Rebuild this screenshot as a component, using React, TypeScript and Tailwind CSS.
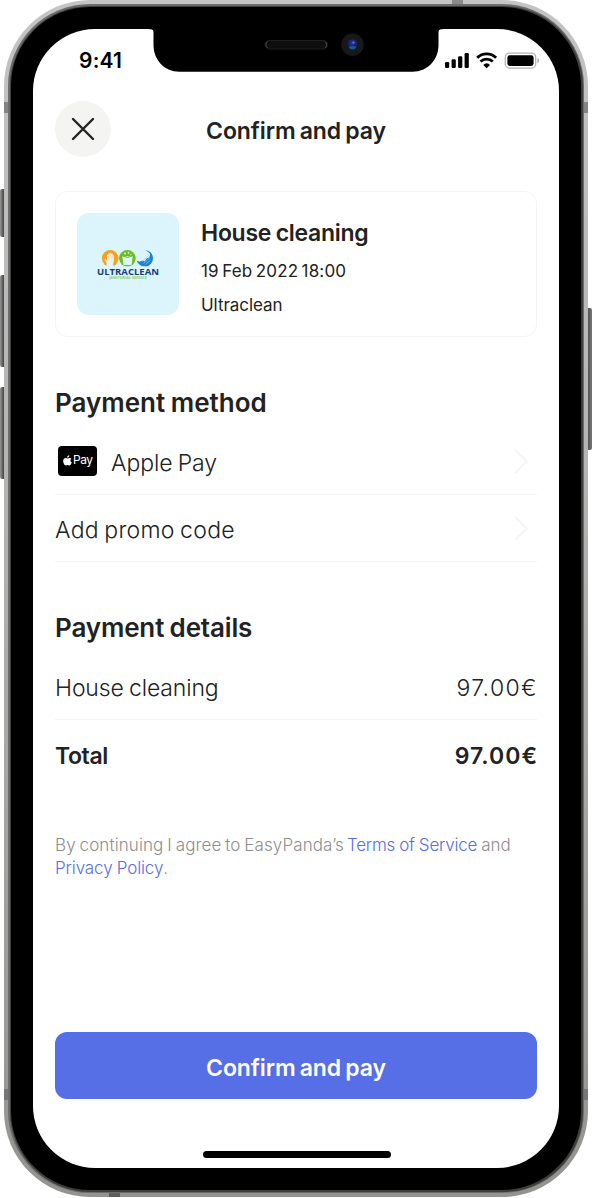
import type { ReactNode } from "react";

function StatusIcons() {
  return (
    <svg width="96" height="20" viewBox="0 0 96 20" fill="none">
      <g fill="#000">
        <rect x="1" y="12" width="4.200" height="6" rx="1.200" />
        <rect x="7.600" y="9.300" width="4.200" height="8.700" rx="1.200" />
        <rect x="14.100" y="6.200" width="4.200" height="11.800" rx="1.200" />
        <rect x="20.600" y="3" width="4.200" height="15" rx="1.200" />
      </g>
      <path d="M33.200 7.700a13.600 13.600 0 0 1 18.900 0" stroke="#000" strokeWidth="2.900" />
      <path d="M36.500 11.500a9 9 0 0 1 12.300 0" stroke="#000" strokeWidth="2.800" />
      <path d="M42.650 18.300l-3.400-3.400a5 5 0 0 1 6.800 0z" fill="#000" />
      <rect x="61.300" y="3.100" width="30.400" height="15" rx="4.200" stroke="#b3b3b3" strokeWidth="1.300" />
      <rect x="63.400" y="5.200" width="26.200" height="10.800" rx="2.400" fill="#000" />
      <path d="M93.400 8v5.200c1.100-.4 1.800-1.400 1.800-2.600s-.7-2.200-1.800-2.600z" fill="#b3b3b3" />
    </svg>
  );
}

function Notch() {
  return (
    <svg className="absolute left-1/2 top-[-1px] -translate-x-1/2" width="294" height="45" viewBox="0 0 294 45">
      <defs>
        <radialGradient id="lens" cx="50%" cy="35%" r="65%">
          <stop offset="0" stopColor="#3a2fa8" />
          <stop offset="0.5" stopColor="#14246f" />
          <stop offset="1" stopColor="#071225" />
        </radialGradient>
      </defs>
      <path d="M0 0v1.200h1.500Q4.500 1.200 4.500 4.500V17c0 15 11 26.700 26 26.700h233c15 0 26-11.700 26-26.700V4.500Q289.500 1.200 292.500 1.200H294V0z" fill="#000" />
      <rect x="116" y="12.500" width="62.500" height="8.500" rx="4.250" fill="#0e0e0e" stroke="#1f1f1f" />
      <path d="M118.500 13.500a4.200 4.200 0 0 0 0 6.500M176 13.500a4.200 4.200 0 0 1 0 6.500" stroke="#4a4a4a" strokeWidth="1" fill="none" />
      <circle cx="203.500" cy="16.700" r="11.200" fill="#181818" />
      <circle cx="203.500" cy="16.700" r="5.600" fill="url(#lens)" />
      <path d="M199.500 19q4-2 8 0-1.500 2.500-4 2.500t-4-2.500z" fill="#126a9c" opacity=".8" />
      <circle cx="204.500" cy="14.500" r="1.100" fill="#7d6cff" />
    </svg>
  );
}

function UltracleanLogo() {
  return (
    <svg width="64" height="32" viewBox="0 0 64 32">
      <circle cx="14.200" cy="9.300" r="8.300" fill="#f9a11b" />
      <path d="M10.600 18.500V13.800l-2.200-3.400 1-.7 1.600 1.700V5.800h1.300V4.400h1.500v-.7h1.500v1h1.400v1.500h1.200V12l-.6 2.500v4z" fill="#e6f3ee" />
      <path d="M12.500 6v3.500M14.300 5.500v4M16.100 6v3.500" stroke="#f9c77a" strokeWidth=".4" />
      <circle cx="31.400" cy="9.300" r="8.300" fill="#6abf1e" />
      <path d="M26.300 7.200h10.400l-1.100 8.800h-8.200z" fill="#dff5fd" />
      <path d="M27 7q4.500 3 9 0" stroke="#6abf1e" strokeWidth="1" fill="none" />
      <circle cx="29" cy="4.500" r="1" fill="#dff5fd" />
      <circle cx="32.500" cy="3.800" r=".9" fill="#dff5fd" />
      <circle cx="34.800" cy="5.600" r=".7" fill="#dff5fd" />
      <path d="M49 1a8.300 8.300 0 1 1-8.300 10.500l2.900 1.200 2.300-1 2.900.6 1.600-2.600 3-1.400.8-3.200Q52.500 2.500 49 1z" fill="#1b82d6" />
      <path d="M46 12.500l7-6M47.500 14.500l6.500-6M49.500 15.500l5-4.500" stroke="#8fcaf2" strokeWidth=".7" />
      <rect x="1" y="17.600" width="62" height="10" fill="#dcf5fd" />
      <text x="1" y="25.900" textLength="62" lengthAdjust="spacingAndGlyphs" fontFamily="Open Sans, sans-serif" fontWeight="700" fontSize="9.600" fill="#15407a">ULTRACLEAN</text>
      <text x="13" y="29.600" textLength="38" lengthAdjust="spacingAndGlyphs" fontFamily="Open Sans, sans-serif" fontWeight="700" fontSize="3.200" fill="#8fd06a">JANITORIAL SERVICE</text>
    </svg>
  );
}

function ApplePayBadge() {
  return (
    <span className="mb-[2px] ml-[3px] flex h-[30px] w-[39px] items-center justify-center gap-[1.5px] rounded-[4px] bg-black pb-px">
      <svg width="9" height="11" viewBox="0 0 16 19" fill="#fff">
        <path d="M11.200 0c.2 2.300-1.700 4.400-3.900 4.300C7 2.200 9 .1 11.200 0zM15 6.500c-2.600 1.600-2.200 5.300.6 6.500-.9 2.700-2.600 5.400-4.300 5.400-1.200 0-1.700-.8-3.100-.8s-2 .8-3.200.8C2.600 18.400.3 14 .3 10.500c0-3.500 2.200-5.500 4.500-5.500 1.500 0 2.600.9 3.500.9S10.500 5 12 5c1 0 2.200.5 3 1.500z" />
      </svg>
      <span className="text-[12px] leading-none tracking-[-0.5px] text-white">Pay</span>
    </span>
  );
}

function Chevron() {
  return (
    <svg className="mr-[8px] ml-auto" width="15" height="25" viewBox="0 0 15 25" fill="none">
      <path d="M1.500 1.500l11.500 11-11.500 11" stroke="#f4f4f2" strokeWidth="2" strokeLinecap="round" strokeLinejoin="round" />
    </svg>
  );
}

function Row({ children, className }: { children: ReactNode; className: string }) {
  return <div className={`flex items-center ${className}`}>{children}</div>;
}

export default function App() {
  return (
    <main
      className="relative h-[1198px] w-[592px] overflow-hidden bg-white pl-1 text-[#222]"
      style={{ fontFamily: "Inter, 'Liberation Sans', sans-serif" }}
    >
      <i className="absolute left-0 top-[189px] h-[48px] w-1 rounded-l-[2px] bg-linear-to-r from-[#999] via-[#6b6b6b] to-[#444]" />
      <i className="absolute left-0 top-[275px] h-[92px] w-1 rounded-l-[2px] bg-linear-to-r from-[#999] via-[#6b6b6b] to-[#444]" />
      <i className="absolute left-0 top-[387px] h-[92px] w-1 rounded-l-[2px] bg-linear-to-r from-[#999] via-[#6b6b6b] to-[#444]" />
      <i className="absolute left-[588px] top-[308px] h-[142px] w-1 rounded-r-[2px] bg-linear-to-r from-[#555] to-[#777]" />

      <div className="relative h-[1197px] w-[584px] overflow-hidden rounded-[86px] bg-linear-to-b from-[#c4c4c4] via-[#b0afae] to-[#939391] p-1">
        <i className="absolute left-0 top-[102px] h-[11px] w-full bg-[#848484]" />
        <i className="absolute left-0 top-[1089px] h-[11px] w-full bg-[#767676]" />
        <i className="absolute left-[448px] top-0 h-1 w-[11px] bg-[#8a8a8a]" />
        <i className="absolute bottom-0 left-[105px] h-1 w-[11px] bg-[#5e5e5c]" />
        <div className="relative h-full rounded-[82px] bg-[#6c6c6a] p-[1.5px]">
          <div className="h-full rounded-[80px] bg-[#3e3e3c] p-[1.5px]">
            <div className="h-full rounded-[79px] bg-black px-[22px] pt-[22px] pb-[22px]">
              <div className="relative flex h-[1139px] flex-col rounded-[62px] bg-white px-[22px]">
                <Notch />
                <header className="flex h-[62px] shrink-0 justify-between">
                  <span className="mt-[19px] ml-[24px] text-[21px] leading-[26px] font-semibold tracking-[0.2px] text-black">9:41</span>
                  <span className="mt-[21px] mr-[-3px]">
                    <StatusIcons />
                  </span>
                </header>

                <div className="mt-[10px] grid h-[56px] shrink-0 grid-cols-[56px_1fr_56px] items-center">
                  <button aria-label="Close" className="flex size-14 items-center justify-center rounded-full bg-[#f4f4f2]">
                    <svg width="24" height="24" viewBox="0 0 24 24" stroke="#222" strokeWidth="2.400" strokeLinecap="round">
                      <path d="M2 2l20 20M22 2L2 22" />
                    </svg>
                  </button>
                  <h1 className="pt-1 text-center text-[23px] leading-7 font-semibold tracking-[-0.1px] [word-spacing:-1.5px]">Confirm and pay</h1>
                </div>

                <section className="mt-[34px] flex h-[146px] shrink-0 items-center rounded-xl border-[1.5px] border-[#f4f4f3] pl-[21px]">
                  <div className="flex size-[102px] items-center justify-center rounded-xl bg-[#dcf5fd] pt-px">
                    <UltracleanLogo />
                  </div>
                  <div className="mt-[7px] ml-[22px]">
                    <h2 className="text-[23px] leading-7 font-semibold tracking-[-0.27px] [word-spacing:-1px]">House cleaning</h2>
                    <p className="mt-[12px] text-[17px] leading-6 font-[370] tracking-[0.15px] [word-spacing:-1.5px]">19 Feb 2022 18:00</p>
                    <p className="mt-[10px] text-[17px] leading-6 font-[370] tracking-[-0.05px]">Ultraclean</p>
                  </div>
                </section>

                <h2 className="mt-[50px] text-[26px] leading-8 font-semibold [word-spacing:-1px]">Payment method</h2>
                <Row className="mt-[10px] h-[66px] shrink-0 border-b-[1.5px] border-[#f4f4f3]">
                  <ApplePayBadge />
                  <span className="ml-[14px] pt-[3px] text-[23px] font-[350] tracking-[-0.1px] [word-spacing:-1px]">Apple Pay</span>
                  <Chevron />
                </Row>
                <Row className="h-[67px] shrink-0 border-b-[1.5px] border-[#f4f4f3]">
                  <span className="pt-[5px] text-[23px] font-[350] tracking-[0.3px] [word-spacing:-1.5px]">Add promo code</span>
                  <Chevron />
                </Row>

                <h2 className="mt-[50px] text-[26px] leading-8 font-semibold tracking-[-0.15px] [word-spacing:-1px]">Payment details</h2>
                <Row className="mt-[11px] h-[65px] shrink-0 justify-between border-b-[1.5px] border-[#f4f4f3] pt-[3px] text-[23px] font-[350]">
                  <span className="tracking-[-0.15px] [word-spacing:-1px]">House cleaning</span>
                  <span className="mr-[-1px] tracking-[1.4px]">97.00€</span>
                </Row>
                <Row className="h-[72px] shrink-0 justify-between text-[23px] font-semibold">
                  <span className="tracking-[-0.4px]">Total</span>
                  <span className="mr-[-1px] tracking-[1px]">97.00€</span>
                </Row>

                <p className="mt-[42px] text-[17px] leading-[22.5px] font-[350] text-[#8e8e8e]">
                  <span className="tracking-[0.1px] [word-spacing:-1px]">By continuing I agree to EasyPanda’s</span>
                  <a className="ml-[3px] tracking-[-0.2px] text-[#566ee6] [word-spacing:-0.5px]">Terms of Service</a>
                  <span className="ml-[4px]">and</span>
                  <br />
                  <a className="tracking-[-0.1px] text-[#566ee6] [word-spacing:-0.5px]">Privacy Policy</a>.
                </p>

                <button className="mt-auto mb-[69px] h-[67px] shrink-0 rounded-xl bg-[#566ee6] pt-[5px] text-[23px] font-semibold tracking-[-0.1px] text-white [word-spacing:-1.5px]">
                  Confirm and pay
                </button>
                <i className="absolute bottom-[10px] left-[170px] h-[7px] w-[188px] rounded-full bg-black" />
              </div>
            </div>
          </div>
        </div>
      </div>
    </main>
  );
}
